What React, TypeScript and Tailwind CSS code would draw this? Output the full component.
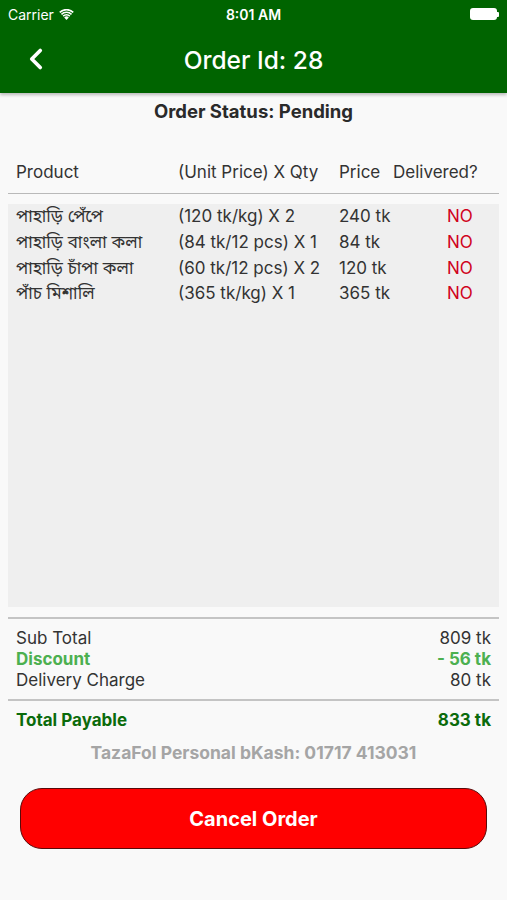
import { ChevronLeft } from "lucide-react";

const items = [
  { name: "পাহাড়ি পেঁপে", unit: "(120 tk/kg) X 2", price: "240 tk" },
  { name: "পাহাড়ি বাংলা কলা", unit: "(84 tk/12 pcs) X 1", price: "84 tk" },
  { name: "পাহাড়ি চাঁপা কলা", unit: "(60 tk/12 pcs) X 2", price: "120 tk" },
  { name: "পাঁচ মিশালি", unit: "(365 tk/kg) X 1", price: "365 tk" },
];

const font = { fontFamily: "Inter, 'Noto Sans Bengali', 'Noto Sans', sans-serif" };

export default function App() {
  return (
    <div className="w-[507px] h-[900px] bg-[#f9f9f9] flex flex-col text-[#2a2a2a]" style={font}>
      {/* header */}
      <div className="bg-[#006400] h-[93px] text-white shadow-[0_2px_3px_rgba(0,0,0,0.25)] relative z-10">
        <div className="h-[28px] flex items-center justify-between px-[8px] text-[14px]">
          <div className="flex items-center gap-[5px] w-[100px]">
            <span>Carrier</span>
            <svg width="15" height="11" viewBox="0 0 15 11" fill="white">
              <path d="M7.5 11 L5.2 8.4 A3.4 3.4 0 0 1 9.8 8.4 Z" />
              <path d="M3.6 6.6 A5.6 5.6 0 0 1 11.4 6.6 L10.3 7.8 A4 4 0 0 0 4.7 7.8 Z" />
              <path d="M1.9 4.7 A8 8 0 0 1 13.1 4.7 L12 5.9 A6.4 6.4 0 0 0 3 5.9 Z" />
              <path d="M0.2 2.8 A10.5 10.5 0 0 1 14.8 2.8 L13.7 4 A8.9 8.9 0 0 0 1.3 4 Z" />
            </svg>
          </div>
          <span className="font-semibold">8:01 AM</span>
          <div className="w-[100px] flex justify-end">
            <div className="flex items-center">
              <div className="w-[27px] h-[12px] rounded-[3px] bg-white" />
              <div className="w-[2px] h-[5px] bg-white rounded-r-[1px]" />
            </div>
          </div>
        </div>
        <div className="h-[65px] flex items-center relative">
          <ChevronLeft className="absolute left-[19px] top-[14px]" size={34} strokeWidth={2.6} />
          <div className="flex-1 text-center text-[24.5px] font-medium">Order Id: 28</div>
        </div>
      </div>

      <div className="text-center font-bold text-[18.5px] mt-[5px]">Order Status: Pending</div>

      {/* table header */}
      <div className="mt-[34px] flex text-[17px] px-[16px] text-[#333]">
        <div className="w-[162px]">Product</div>
        <div className="w-[161px]">(Unit Price) X Qty</div>
        <div className="w-[54px]">Price</div>
        <div className="whitespace-nowrap">Delivered?</div>
      </div>
      <div className="mx-[8px] mt-[8px] h-[1px] bg-[#b9b9b9]" />

      <div className="mx-[8px] mt-[10px] h-[403px] bg-[#efefef] pt-[0px]">
        {items.map((it) => (
          <div key={it.name} className="flex text-[17px] h-[25.7px] items-center px-[8px] text-[#333]">
            <div className="w-[162px] whitespace-nowrap">{it.name}</div>
            <div className="w-[161px] whitespace-nowrap">{it.unit}</div>
            <div className="w-[108px]">{it.price}</div>
            <div className="text-[#d0021b]">NO</div>
          </div>
        ))}
      </div>

      <div className="mx-[8px] mt-[10px] h-[2px] bg-[#c4c4c4]" />
      <div className="px-[16px] mt-[9px] text-[17px] leading-[21px] text-[#333]">
        <div className="flex justify-between">
          <span>Sub Total</span>
          <span>809 tk</span>
        </div>
        <div className="flex justify-between font-bold text-[#4cb050]">
          <span>Discount</span>
          <span>- 56 tk</span>
        </div>
        <div className="flex justify-between">
          <span>Delivery Charge</span>
          <span>80 tk</span>
        </div>
      </div>
      <div className="mx-[8px] mt-[8px] h-[2px] bg-[#c4c4c4]" />
      <div className="flex justify-between px-[16px] mt-[7px] text-[17px] font-bold text-[#0b6b0b]">
        <span>Total Payable</span>
        <span>833 tk</span>
      </div>
      <div className="text-center mt-[6px] text-[17.5px] font-bold text-[#a5a5a5]">
        TazaFol Personal bKash: 01717 413031
      </div>

      <button className="mx-[20px] mt-[22px] h-[61px] rounded-[22px] bg-[#ff0000] border border-[#5a0a0a] text-white font-bold text-[20px]">
        Cancel Order
      </button>
    </div>
  );
}
